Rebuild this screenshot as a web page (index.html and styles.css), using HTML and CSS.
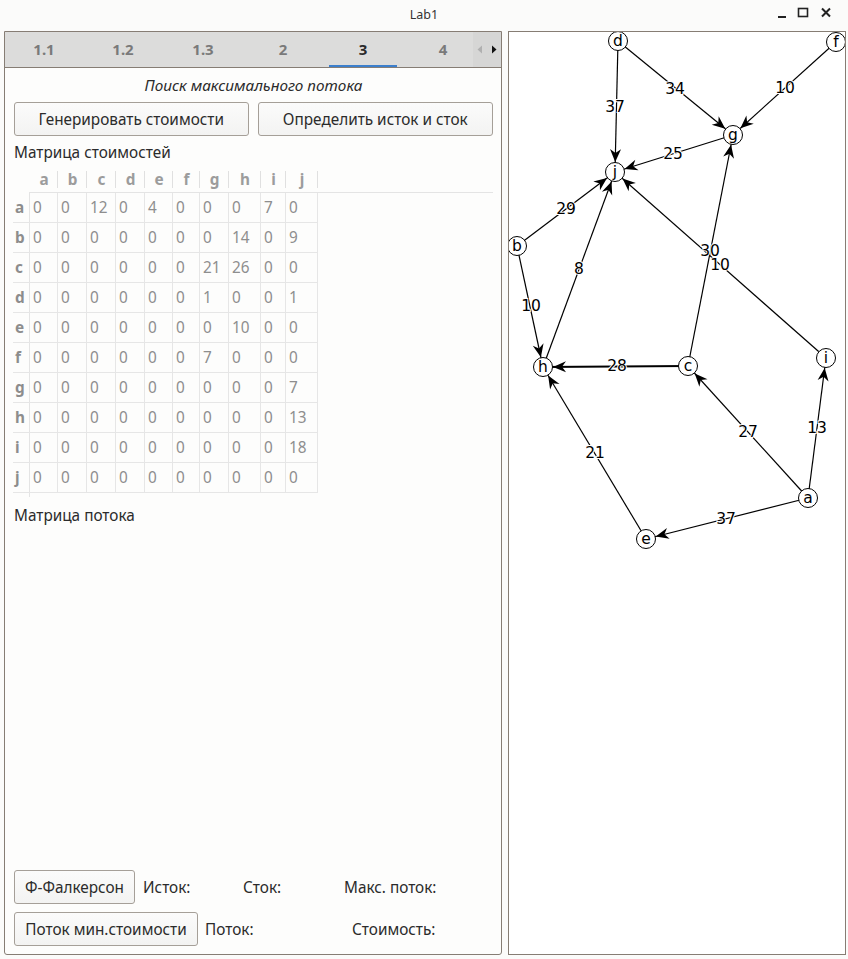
FILE: index.html
```html
<!DOCTYPE html>
<html lang="ru">
<head>
<meta charset="utf-8">
<title>Lab1</title>
<link rel="stylesheet" href="styles.css">
</head>
<body>
<div class="window">
  <div class="titlebar">
    <span class="title">Lab1</span>
    <div class="controls">
      <svg width="60" height="14" viewBox="0 0 60 14">
        <rect x="0" y="10" width="8" height="2" fill="#222"/>
        <rect x="20.5" y="2.5" width="9" height="8" fill="none" stroke="#222" stroke-width="1.6"/>
        <path d="M44 2.5 L52 10.5 M52 2.5 L44 10.5" stroke="#222" stroke-width="2" fill="none"/>
      </svg>
    </div>
  </div>
  <div class="main">
    <div class="left">
      <div class="tabbar">
        <div class="tab">1.1</div>
        <div class="tab">1.2</div>
        <div class="tab">1.3</div>
        <div class="tab">2</div>
        <div class="tab active">3</div>
        <div class="tab">4</div>
        <div class="scroller">
          <svg width="28" height="35" viewBox="0 0 28 35">
            <path d="M9 13.5 L4.5 17.5 L9 21.5 Z" fill="#b0b0b0"/>
            <path d="M19 13.5 L23.5 17.5 L19 21.5 Z" fill="#111"/>
          </svg>
        </div>
      </div>
      <div class="content">
        <div class="subtitle">Поиск максимального потока</div>
        <div class="btnrow">
          <button class="btn wide">Генерировать стоимости</button>
          <button class="btn wide">Определить исток и сток</button>
        </div>
        <div class="label">Матрица стоимостей</div>
        <div class="tablebox">
          <div class="grid">
            <div class="corner"></div>
            <div class="hh">a</div><div class="hh">b</div><div class="hh">c</div><div class="hh">d</div><div class="hh">e</div><div class="hh">f</div><div class="hh">g</div><div class="hh">h</div><div class="hh">i</div><div class="hh">j</div>

            <div class="vh">a</div><div class="c">0</div><div class="c">0</div><div class="c">12</div><div class="c">0</div><div class="c">4</div><div class="c">0</div><div class="c">0</div><div class="c">0</div><div class="c">7</div><div class="c">0</div>
            <div class="vh">b</div><div class="c">0</div><div class="c">0</div><div class="c">0</div><div class="c">0</div><div class="c">0</div><div class="c">0</div><div class="c">0</div><div class="c">14</div><div class="c">0</div><div class="c">9</div>
            <div class="vh">c</div><div class="c">0</div><div class="c">0</div><div class="c">0</div><div class="c">0</div><div class="c">0</div><div class="c">0</div><div class="c">21</div><div class="c">26</div><div class="c">0</div><div class="c">0</div>
            <div class="vh">d</div><div class="c">0</div><div class="c">0</div><div class="c">0</div><div class="c">0</div><div class="c">0</div><div class="c">0</div><div class="c">1</div><div class="c">0</div><div class="c">0</div><div class="c">1</div>
            <div class="vh">e</div><div class="c">0</div><div class="c">0</div><div class="c">0</div><div class="c">0</div><div class="c">0</div><div class="c">0</div><div class="c">0</div><div class="c">10</div><div class="c">0</div><div class="c">0</div>
            <div class="vh">f</div><div class="c">0</div><div class="c">0</div><div class="c">0</div><div class="c">0</div><div class="c">0</div><div class="c">0</div><div class="c">7</div><div class="c">0</div><div class="c">0</div><div class="c">0</div>
            <div class="vh">g</div><div class="c">0</div><div class="c">0</div><div class="c">0</div><div class="c">0</div><div class="c">0</div><div class="c">0</div><div class="c">0</div><div class="c">0</div><div class="c">0</div><div class="c">7</div>
            <div class="vh">h</div><div class="c">0</div><div class="c">0</div><div class="c">0</div><div class="c">0</div><div class="c">0</div><div class="c">0</div><div class="c">0</div><div class="c">0</div><div class="c">0</div><div class="c">13</div>
            <div class="vh">i</div><div class="c">0</div><div class="c">0</div><div class="c">0</div><div class="c">0</div><div class="c">0</div><div class="c">0</div><div class="c">0</div><div class="c">0</div><div class="c">0</div><div class="c">18</div>
            <div class="vh">j</div><div class="c">0</div><div class="c">0</div><div class="c">0</div><div class="c">0</div><div class="c">0</div><div class="c">0</div><div class="c">0</div><div class="c">0</div><div class="c">0</div><div class="c">0</div>
          </div>
        </div>
        <div class="label label2">Матрица потока</div>
        <div class="spacer"></div>
        <div class="bottomrow">
          <button class="btn b1">Ф-Фалкерсон</button>
          <span class="info w100">Исток:</span>
          <span class="info w101">Сток:</span>
          <span class="info">Макс. поток:</span>
        </div>
        <div class="bottomrow second">
          <button class="btn b2">Поток мин.стоимости</button>
          <span class="info w147">Поток:</span>
          <span class="info">Стоимость:</span>
        </div>
      </div>
    </div>
    <div class="right">
      <svg class="graph" width="336" height="922" viewBox="509 32 336 922">
        <defs>
          <marker id="arr" markerUnits="userSpaceOnUse" markerWidth="30" markerHeight="16" viewBox="-15 -8 30 16" refX="10" refY="0" orient="auto" overflow="visible">
            <path d="M0,0 L-13,-5.5 L-9,0 L-13,5.5 Z" fill="#000"/>
          </marker>
        </defs>
        <g class="edges" stroke="#000" stroke-width="1.2" marker-end="url(#arr)">
          <line x1="618" y1="41" x2="615" y2="172"/>
          <line x1="618" y1="41" x2="733" y2="135"/>
          <line x1="836" y1="42" x2="733" y2="135"/>
          <line x1="733" y1="135" x2="615" y2="172"/>
          <line x1="517" y1="246" x2="615" y2="172"/>
          <line x1="543" y1="367" x2="615" y2="172"/>
          <line x1="826" y1="358" x2="615" y2="172"/>
          <line x1="688" y1="366" x2="733" y2="135"/>
          <line x1="517" y1="246" x2="543" y2="367"/>
          <line x1="688" y1="366" x2="543" y2="367" stroke-width="1.8"/>
          <line x1="808" y1="498" x2="688" y2="366"/>
          <line x1="808" y1="498" x2="826" y2="358"/>
          <line x1="646" y1="539" x2="543" y2="367"/>
          <line x1="808" y1="498" x2="646" y2="539"/>
        </g>
        <g class="elabels">
          <text x="615" y="107">37</text>
          <text x="675" y="89">34</text>
          <text x="785" y="88">10</text>
          <text x="673" y="154">25</text>
          <text x="566" y="209">29</text>
          <text x="579" y="269">8</text>
          <text x="710" y="251">30</text>
          <text x="720" y="265">10</text>
          <text x="531" y="306">10</text>
          <text x="617" y="366">28</text>
          <text x="748" y="432">27</text>
          <text x="817" y="428">13</text>
          <text x="595" y="453">21</text>
          <text x="726" y="519">37</text>
        </g>
        <g class="nodes">
          <circle cx="618" cy="41" r="9.5"/><text x="618" y="41">d</text>
          <circle cx="836" cy="42" r="9.5"/><text x="836" y="42">f</text>
          <circle cx="733" cy="135" r="9.5"/><text x="733" y="135">g</text>
          <circle cx="615" cy="172" r="9.5"/><text x="615" y="172">j</text>
          <circle cx="517" cy="246" r="9.5"/><text x="517" y="246">b</text>
          <circle cx="543" cy="367" r="9.5"/><text x="543" y="367">h</text>
          <circle cx="688" cy="366" r="9.5"/><text x="688" y="366">c</text>
          <circle cx="826" cy="358" r="9.5"/><text x="826" y="358">i</text>
          <circle cx="808" cy="498" r="9.5"/><text x="808" y="498">a</text>
          <circle cx="646" cy="539" r="9.5"/><text x="646" y="539">e</text>
        </g>
      </svg>
    </div>
  </div>
</div>
</body>
</html>
```
FILE: styles.css
```css
* { box-sizing: border-box; }
html, body { margin: 0; padding: 0; }
body {
  background: #fbfbfa;
  font-family: "Noto Sans", "Open Sans", sans-serif;
  font-size: 15.33px;
  color: #2b2b2b;
}
.window { width: 848px; height: 959px; display: flex; flex-direction: column; }
.titlebar {
  height: 31px;
  display: flex;
  align-items: center;
  justify-content: center;
  position: relative;
}
.title { font-size: 12.5px; color: #333; margin-top: -3px; }
.controls { position: absolute; right: 10px; top: 6px; line-height: 0; }

.main { display: flex; padding-left: 4px; gap: 6px; }
.left {
  width: 498px;
  height: 924px;
  border: 1px solid #867d74;
  border-radius: 0 0 3px 3px;
  background: #fdfdfc;
  display: flex;
  flex-direction: column;
}
.right {
  width: 338px;
  height: 924px;
  border: 1px solid #867d74;
  background: #ffffff;
  overflow: hidden;
}
.graph { display: block; }

.tabbar {
  position: relative;
  height: 36px;
  background: #dcdcdb;
  border-bottom: 1px solid #867d74;
  display: flex;
  overflow: hidden;
}
.tab {
  flex: 0 0 80px;
  height: 35px;
  line-height: 35px;
  text-align: center;
  font-weight: bold;
  font-size: 15px;
  color: #7a7a7a;
  position: relative;
}
.tab:first-child { flex-basis: 78px; }
.tab.active { color: #2a2a2a; }
.tab.active::after {
  content: "";
  position: absolute;
  left: 6px;
  right: 6px;
  bottom: 0;
  height: 2px;
  background: #3c7fcc;
}
.scroller {
  position: absolute;
  right: 0;
  top: 0;
  width: 28px;
  height: 35px;
  background: #d6d6d5;
  line-height: 0;
}

.content {
  flex: 1;
  display: flex;
  flex-direction: column;
  padding: 0 8px 8px 9px;
}
.subtitle {
  margin-top: 6px;
  height: 22px;
  line-height: 22px;
  text-align: center;
  font-style: italic;
  color: #2b2b2b;
}
.btnrow { display: flex; gap: 9px; margin-top: 6px; }
.btn {
  font-family: inherit;
  font-size: 15.33px;
  color: #2b2b2b;
  height: 34px;
  padding: 0 6px;
  background: linear-gradient(#fbfbfb, #f3f3f2);
  border: 1px solid #a59f98;
  border-radius: 3px;
  white-space: nowrap;
}
.btn.wide { width: 235px; }
.btn.wide + .btn.wide { width: 236px; }
.label { margin-top: 6px; height: 20px; line-height: 20px; }
.label2 { margin-top: 8px; }

.tablebox {
  margin-top: 6px;
  margin-left: -1px;
  width: 480px;
  height: 329px;
  background:
    linear-gradient(#e4e4e4, #e4e4e4) 16px 24px / calc(100% - 16px) 1px no-repeat,
    linear-gradient(#e4e4e4, #e4e4e4) 16px 24px / 1px calc(100% - 24px) no-repeat;
}
.grid {
  display: grid;
  grid-template-columns: 17px 28px 29px 29px 29px 28px 27px 29px 32px 25px 32px;
  grid-template-rows: 25px repeat(10, 30px);
  width: 305px;
}
.hh {
  position: relative;
  text-align: center;
  font-weight: bold;
  color: #9c9c9c;
  line-height: 23px;
  height: 24px;
}
.hh::after {
  content: "";
  position: absolute;
  right: 0;
  top: 3px;
  height: 17px;
  width: 1px;
  background: #e0e0e0;
}
.vh {
  font-weight: bold;
  color: #8d8d8d;
  padding-left: 2px;
  line-height: 29px;
  border-bottom: 1px solid #e6e6e6;
}
.c {
  color: #8e8e8e;
  padding-left: 3px;
  line-height: 29px;
  border-right: 1px solid #e6e6e6;
  border-bottom: 1px solid #e6e6e6;
}
.spacer { flex: 1; }
.bottomrow { display: flex; align-items: center; }
.bottomrow.second { margin-top: 8px; }
.b1 { width: 121px; margin-right: 8px; }
.b2 { width: 184px; margin-right: 7px; }
.info { color: #2b2b2b; white-space: nowrap; }
.w100 { width: 100px; }
.w101 { width: 101px; }
.w147 { width: 147px; }

.graph .elabels text {
  font-family: "DejaVu Sans", sans-serif;
  font-size: 15.5px;
  text-anchor: middle;
  dominant-baseline: central;
  fill: #000;
  stroke: #fff;
  stroke-width: 2px;
  paint-order: stroke;
}
.graph .nodes circle { fill: #fff; stroke: #000; stroke-width: 1; }
.graph .nodes text {
  font-family: "DejaVu Sans", sans-serif;
  font-size: 15.5px;
  text-anchor: middle;
  dominant-baseline: central;
  fill: #000;
}
```
